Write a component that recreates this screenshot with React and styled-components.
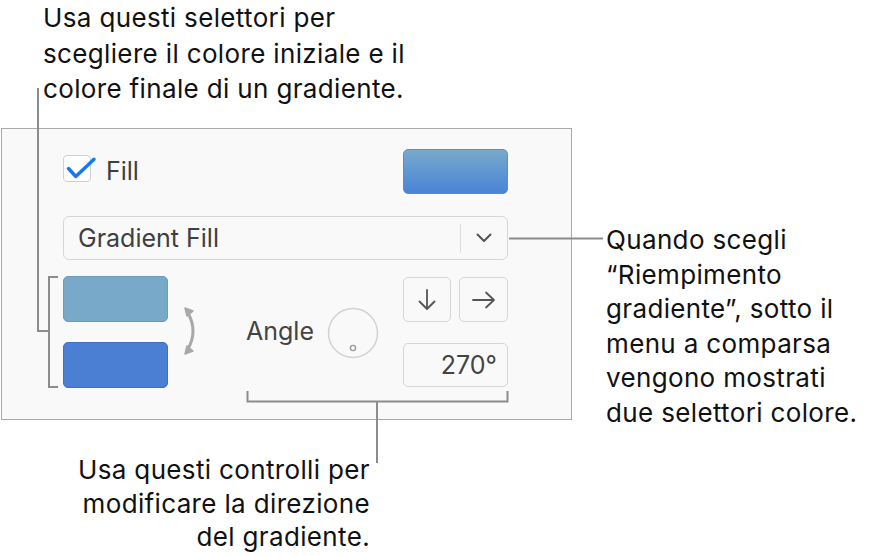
import React from "react";
import styled, { createGlobalStyle } from "styled-components";

const Global = createGlobalStyle`
  html, body { margin: 0; padding: 0; background: #ffffff; }
  body { font-family: Inter, "Noto Sans", sans-serif; }
`;

const Page = styled.div`
  position: relative;
  width: 880px;
  height: 556px;
  overflow: hidden;
  background: #ffffff;
  box-sizing: border-box;
  font-family: Inter, "Noto Sans", sans-serif;
`;

const Note = styled.div`
  font-size: 26px;
  line-height: ${(p) => p.$lh || 35}px;
  color: #111111;
  letter-spacing: 0.35px;
  white-space: nowrap;
`;

const TopNote = styled(Note)`
  margin-left: 43px;
`;

const Middle = styled.div`
  display: flex;
  align-items: flex-start;
  margin-top: 21.5px;
`;

const SideNote = styled(Note)`
  margin-left: 34px;
  margin-top: 95px;
`;

const BottomNote = styled(Note)`
  width: 370px;
  text-align: right;
  margin-top: 23px;
`;

const Panel = styled.div`
  box-sizing: border-box;
  margin-left: 1px;
  width: 571px;
  height: 292px;
  border: 1px solid #a9a9a9;
  background: #f9f9f9;
  padding: 20px 63px 0 61px;
  display: flex;
  flex-direction: column;
  color: #3f3f3f;
  font-size: 25px;
`;

const FillRow = styled.div`
  display: flex;
  justify-content: space-between;
  align-items: flex-start;
  height: 45px;
`;

const CheckLabel = styled.label`
  display: flex;
  align-items: flex-start;
  gap: 15px;
  margin-top: 6px;
  line-height: 27px;
`;

const FillText = styled.span`
  padding-top: 3px;
`;

const CheckBox = styled.span`
  position: relative;
  box-sizing: border-box;
  width: 28px;
  height: 27px;
  border: 1.5px solid #d0d0d0;
  border-radius: 4px;
  background: #ffffff;
`;

const CheckMark = styled.svg`
  position: absolute;
  left: -1.5px;
  top: -1.5px;
  overflow: visible;
`;

const Swatch = styled.div`
  box-sizing: border-box;
  width: 105px;
  height: 45px;
  border-radius: 5px;
  border: 1px solid #5f8dbf;
  background: linear-gradient(to bottom, #78aacb, #4983d7);
`;

const Select = styled.div`
  box-sizing: border-box;
  margin-top: 22px;
  height: 44px;
  display: flex;
  align-items: center;
  border: 1.5px solid #d6d6d6;
  border-radius: 6px;
  background: #f9f9f9;
`;

const SelectText = styled.span`
  flex: 1;
  padding-left: 14px;
`;

const SelectDivider = styled.span`
  width: 1.5px;
  height: 29px;
  background: #dcdcdc;
`;

const Chevron = styled.span`
  width: 46px;
  display: flex;
  justify-content: center;
  align-items: center;
`;

const GradientRow = styled.div`
  margin-top: 16px;
  display: grid;
  grid-template-columns: 105px 1fr 105px;
`;

const Wells = styled.div`
  display: flex;
  flex-direction: column;
  gap: 20px;
`;

const Well = styled.div`
  box-sizing: border-box;
  height: 46px;
  border-radius: 5px;
  background: ${(p) => p.$color};
  border: 1px solid ${(p) => p.$border};
`;

const Middlebox = styled.div`
  display: flex;
  align-items: center;
  padding-left: 16px;
  padding-bottom: 2px;
`;

const AngleLabel = styled.span`
  margin-left: 46px;
  color: #444444;
`;

const Dial = styled.svg`
  margin-left: 13px;
  margin-top: 4px;
`;

const Controls = styled.div`
  display: flex;
  flex-direction: column;
  gap: 21px;
  padding-top: 1px;
`;

const ArrowRow = styled.div`
  display: grid;
  grid-template-columns: 48px 49px;
  gap: 8px;
`;

const ArrowButton = styled.div`
  box-sizing: border-box;
  height: 45px;
  border: 1.5px solid #d6d6d6;
  border-radius: 5px;
  display: flex;
  align-items: center;
  justify-content: center;
  background: #f9f9f9;
`;

const AngleField = styled.div`
  box-sizing: border-box;
  height: 44px;
  border: 1.5px solid #d6d6d6;
  border-radius: 5px;
  display: flex;
  align-items: center;
  justify-content: flex-end;
  padding-right: 10px;
  color: #444444;
  background: #f9f9f9;
`;

const Leaders = styled.svg`
  position: absolute;
  left: 0;
  top: 0;
  pointer-events: none;
`;

export default function App() {
  return (
    <Page>
      <Global />
      <TopNote $lh={35.5}>
        Usa questi selettori per
        <br />
        scegliere il colore iniziale e il
        <br />
        colore finale di un gradiente.
      </TopNote>
      <Middle>
        <Panel>
          <FillRow>
            <CheckLabel>
              <CheckBox>
                <CheckMark width="28" height="27" viewBox="0 0 28 27">
                  <path
                    d="M5.5 13.5 L12.8 21.5 L31 4.2"
                    fill="none"
                    stroke="#1677f5"
                    strokeWidth="3.4"
                    strokeLinecap="round"
                    strokeLinejoin="round"
                  />
                </CheckMark>
              </CheckBox>
              <FillText>Fill</FillText>
            </CheckLabel>
            <Swatch />
          </FillRow>
          <Select>
            <SelectText>Gradient Fill</SelectText>
            <SelectDivider />
            <Chevron>
              <svg width="16" height="10" viewBox="0 0 16 10">
                <path d="M1.5 1.5 L8 8 L14.5 1.5" fill="none" stroke="#555" strokeWidth="2" strokeLinecap="round" strokeLinejoin="round" />
              </svg>
            </Chevron>
          </Select>
          <GradientRow>
            <Wells>
              <Well $color="#79a9c8" $border="#6b9bbd" />
              <Well $color="#4a7fd4" $border="#3e70c2" />
            </Wells>
            <Middlebox>
              <svg width="16" height="48" viewBox="0 0 16 48">
                <path d="M4 6 Q14 24 4 42" fill="none" stroke="#a8a8a8" strokeWidth="3" />
                <path d="M1 1 L9 4 L3 9 Z" fill="#a8a8a8" stroke="#a8a8a8" strokeWidth="1.5" strokeLinejoin="round" />
                <path d="M1 47 L9 44 L3 39 Z" fill="#a8a8a8" stroke="#a8a8a8" strokeWidth="1.5" strokeLinejoin="round" />
              </svg>
              <AngleLabel>Angle</AngleLabel>
              <Dial width="52" height="52" viewBox="0 0 52 52">
                <circle cx="26" cy="26" r="24.5" fill="#f9f9f9" stroke="#d2d2d2" strokeWidth="1.5" />
                <circle cx="26" cy="41" r="2.6" fill="none" stroke="#9a9a9a" strokeWidth="1.4" />
              </Dial>
            </Middlebox>
            <Controls>
              <ArrowRow>
                <ArrowButton>
                  <svg width="20" height="22" viewBox="0 0 20 22">
                    <path d="M10 1 V20 M2.5 12.5 L10 20 L17.5 12.5" fill="none" stroke="#555" strokeWidth="1.8" strokeLinecap="round" strokeLinejoin="round" />
                  </svg>
                </ArrowButton>
                <ArrowButton>
                  <svg width="24" height="20" viewBox="0 0 24 20">
                    <path d="M1 10 H22 M14 2.5 L22 10 L14 17.5" fill="none" stroke="#555" strokeWidth="1.8" strokeLinecap="round" strokeLinejoin="round" />
                  </svg>
                </ArrowButton>
              </ArrowRow>
              <AngleField>270°</AngleField>
            </Controls>
          </GradientRow>
        </Panel>
        <SideNote $lh={34.5}>
          Quando scegli
          <br />
          “Riempimento
          <br />
          gradiente”, sotto il
          <br />
          menu a comparsa
          <br />
          vengono mostrati
          <br />
          due selettori colore.
        </SideNote>
      </Middle>
      <BottomNote $lh={33.5}>
        Usa questi controlli per
        <br />
        modificare la direzione
        <br />
        del gradiente.
      </BottomNote>
      <Leaders width="880" height="556" viewBox="0 0 880 556">
        <g fill="none" stroke="#8c8c8c" strokeWidth="2">
          <path d="M38 88 V331 H49" />
          <path d="M58 277 H49 V387 H58" />
          <path d="M509 238.5 H603" />
          <path d="M247.5 391 V401.5 H507.5 V391" />
          <path d="M377 401.5 V463" />
        </g>
      </Leaders>
    </Page>
  );
}
